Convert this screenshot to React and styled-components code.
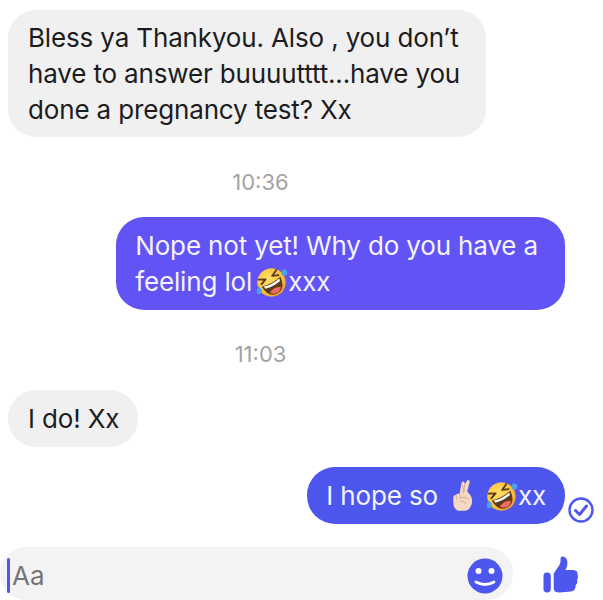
import styled, { createGlobalStyle } from "styled-components";

const Global = createGlobalStyle`
  html, body { margin: 0; padding: 0; background: #fff; }
  body { font-family: Inter, "Liberation Sans", sans-serif; }
`;

function RoflEmoji({ id, gap }) {
  return (
    <RoflSvg $gap={gap} viewBox="0 0 36 36" width={33} height={33}>
      <defs>
        <radialGradient id={id} cx="45%" cy="35%" r="70%">
          <stop offset="0%" stopColor="#ffe169" />
          <stop offset="70%" stopColor="#fbbf3c" />
          <stop offset="100%" stopColor="#e8912a" />
        </radialGradient>
      </defs>
      <g transform="rotate(-28 18 18)">
        <circle cx="18" cy="18" r="15.500" fill={`url(#${id})`} />
        <path d="M6.500 17 Q18 20 29.500 17 Q28.500 31.500 18 31.500 Q7.500 31.500 6.500 17Z" fill="#5d3a1a" />
        <path d="M8.500 18 Q18 20.500 27.500 18 L27 21 Q18 23 9 21Z" fill="#fff" />
        <path d="M11 27 Q18 23 25 27 Q22 31 18 31 Q14 31 11 27Z" fill="#ef6b5f" />
        <path d="M7 8.500 L14 12 L7.500 14.500" fill="none" stroke="#5d3a1a" strokeWidth="2" strokeLinecap="round" strokeLinejoin="round" />
        <path d="M29 8.500 L22 12 L28.500 14.500" fill="none" stroke="#5d3a1a" strokeWidth="2" strokeLinecap="round" strokeLinejoin="round" />
      </g>
      <path d="M4 22 Q0 28 3.500 31 Q8 31 7.500 26Z" fill="#4ba3ee" />
      <path d="M30 3.500 Q36.500 3.500 35 9 Q32 12 29 9Z" fill="#4ba3ee" />
    </RoflSvg>
  );
}

function CrossedFingers() {
  return (
    <FingerSvg viewBox="0 0 26 38" width={22} height={33}>
      <path
        d="M7 37 Q1 34 1.500 25 L1.500 21 Q2 18 4.500 18.500 Q6 15.500 9 17 L11 5 Q11.500 2 14 2.500 L15.500 5 L18 1 Q20.500 0 21 3 L18 14 L22 19 Q25 24 23 30 Q21 36 16 37Z"
        fill="#f4d9c4"
      />
      <path
        d="M11.500 6 L14.500 14 M15.500 5 L13 16 M5 19 L5.500 24 M9 17 L9.500 22 M10 22 Q16 20 19 23 M10 26 Q15 25 17 29"
        fill="none"
        stroke="#cfa78b"
        strokeWidth="1"
        strokeLinecap="round"
      />
    </FingerSvg>
  );
}

export default function App() {
  return (
    <Page>
      <Global />
      <Thread>
        <Bubble $top={10} $padY={9.5} $padR={26}>
          Bless ya Thankyou. Also , you don’t
          <br />
          have to answer buuuutttt...have you
          <br />
          done a pregnancy test? Xx
        </Bubble>
        <Timestamp $top={31}>10:36</Timestamp>
        <Bubble $mine $top={21} $padY={10.5} $padR={27}>
          Nope not yet! Why do you have a
          <br />
          feeling lol
          <RoflEmoji id="rofl-a" gap={3} />
          xxx
        </Bubble>
        <Timestamp $top={30}>11:03</Timestamp>
        <Bubble $top={22} $padY={10.5}>I do! Xx</Bubble>
        <SentRow>
          <Bubble $mine $flat $padY={10.5}>
            I hope so
            <CrossedFingers />
            <RoflEmoji id="rofl-b" />
            xx
          </Bubble>
          <Seen viewBox="0 0 26 26" width="26" height="26">
            <circle cx="13" cy="13" r="11.500" fill="none" stroke="#4d57ee" strokeWidth="2.400" />
            <path d="M7.500 13.500 L11.500 17.500 L18.500 9" fill="none" stroke="#4d57ee" strokeWidth="3" strokeLinecap="round" strokeLinejoin="round" />
          </Seen>
        </SentRow>
      </Thread>
      <Composer>
        <InputPill>
          <Caret />
          <Placeholder>Aa</Placeholder>
          <svg viewBox="0 0 36 36" width="36" height="36">
            <circle cx="18" cy="18" r="17.500" fill="#4d57ee" />
            <circle cx="11.500" cy="13" r="3" fill="#fff" />
            <circle cx="24.500" cy="13" r="3" fill="#fff" />
            <path d="M9 24 Q18 29 27 24" fill="none" stroke="#fff" strokeWidth="2.800" strokeLinecap="round" />
          </svg>
        </InputPill>
        <Like viewBox="0 0 38 38" width="37" height="37">
          <rect x="0.500" y="17" width="7.500" height="20.500" rx="3.500" fill="#4d57ee" />
          <path
            d="M11 18 L17 9 Q18.500 6 18 2 Q18.500 0 21 0.500 Q25.500 2 25 8 Q25 11 23 14.500 L31 14.500 Q36 15 35.500 19 Q37 22 35 24.500 Q36 28 33.500 30 Q34 35 29 36.500 L17 37.500 Q11 37.500 11 33Z"
            fill="#4d57ee"
          />
        </Like>
      </Composer>
    </Page>
  );
}

const Page = styled.div`
  width: 603px;
  height: 600px;
  overflow: hidden;
  display: flex;
  flex-direction: column;
  background: #fff;
`;

const Thread = styled.div`
  flex: 1;
  display: flex;
  flex-direction: column;
  align-items: flex-start;
  padding: 0 38px 0 8px;
`;

const Bubble = styled.div`
  box-sizing: border-box;
  align-self: ${(p) => (p.$mine ? "flex-end" : "flex-start")};
  margin-top: ${(p) => p.$top || 0}px;
  padding: ${(p) => p.$padY}px ${(p) => p.$padR || 19}px ${(p) => p.$padY}px ${(p) => (p.$mine ? 19 : 20)}px;
  border-radius: 28px;
  font-size: 26px;
  line-height: 36px;
  letter-spacing: -0.150px;
  white-space: nowrap;
  color: ${(p) => (p.$mine ? "#f4f2ff" : "#1c1c1e")};
  background: ${(p) => (p.$mine ? (p.$flat ? "#4d57ee" : "#6153f4") : "#f0f0f0")};
`;

const Timestamp = styled.div`
  align-self: stretch;
  margin-top: ${(p) => p.$top}px;
  padding-right: 52px;
  text-align: center;
  font-size: 22px;
  line-height: 28px;
  color: #a3a3a6;
`;

const SentRow = styled.div`
  align-self: flex-end;
  display: flex;
  align-items: flex-end;
  margin-top: 20px;
  margin-right: -29px;
`;

const Seen = styled.svg`
  display: block;
  margin-left: 3px;
  margin-bottom: 1px;
`;

const RoflSvg = styled.svg`
  vertical-align: -8px;
  margin-left: ${(p) => p.$gap || 0}px;
`;

const FingerSvg = styled.svg`
  vertical-align: -7px;
  margin: 0 11px 0 14px;
`;

const Composer = styled.div`
  display: flex;
  align-items: flex-start;
  height: 53px;
  flex-shrink: 0;
`;

const InputPill = styled.div`
  box-sizing: border-box;
  width: 513px;
  height: 53px;
  display: flex;
  align-items: center;
  padding: 4px 10px 0 7px;
  background: #f3f3f3;
  border-radius: 27px;
`;

const Caret = styled.div`
  width: 3px;
  height: 35px;
  border-radius: 2px;
  background: #4d57ee;
  margin-right: 2px;
`;

const Placeholder = styled.span`
  flex: 1;
  font-size: 26px;
  color: #757578;
`;

const Like = styled.svg`
  display: block;
  margin-left: 30px;
  margin-top: 9px;
`;
